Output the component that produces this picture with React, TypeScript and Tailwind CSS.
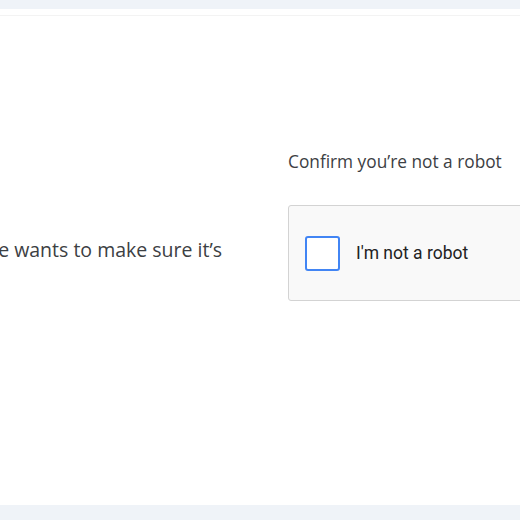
export default function App() {
  return (
    <div className="flex h-[520px] w-[520px] flex-col overflow-hidden bg-white font-['Open_Sans',sans-serif] text-[#3c4043]">
      <div className="h-[9px] shrink-0 bg-[#eff3f8]" />
      <div className="h-[6px] shrink-0" />
      <div className="h-px shrink-0 bg-[#f3f3f3]" />

      <div className="flex min-h-0 flex-1">
        <div className="flex w-[222px] shrink-0 justify-end overflow-hidden pt-[222px]">
          <p className="whitespace-nowrap text-[19.5px] leading-[24px]">The site wants to make sure it’s</p>
        </div>

        <div className="ml-[66px] w-[378px] shrink-0 pt-[135px]">
          <p className="text-[17.3px] leading-[22px]">Confirm you’re not a robot</p>
          <div className="mt-[32px] flex h-[96px] items-center rounded-[3px] border border-[#d3d3d3] bg-[#f9f9f9] pl-4 font-['Roboto',sans-serif]">
            <div className="h-[35px] w-[35px] rounded-[3px] border-2 border-[#4285f4] bg-white" />
            <span className="ml-4 text-[17.5px] text-[#222]">I'm not a robot</span>
          </div>
        </div>
      </div>

      <div className="h-[15px] shrink-0 bg-[#eff3f8]" />
    </div>
  );
}
